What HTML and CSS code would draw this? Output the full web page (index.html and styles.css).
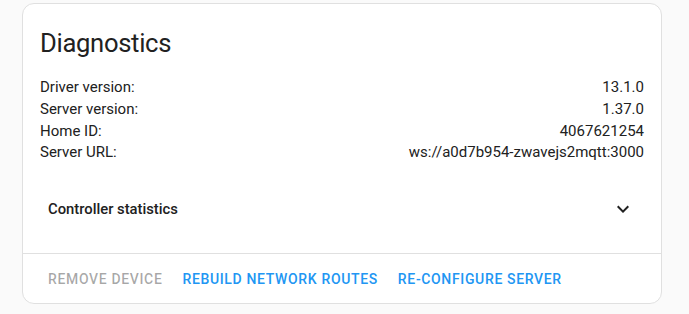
FILE: index.html
```html
<!DOCTYPE html>
<html>
<head>
<meta charset="utf-8">
<link rel="stylesheet" href="styles.css">
</head>
<body>
<div class="page">
  <div class="card">
    <h1 class="card-header">Diagnostics</h1>
    <div class="card-content">
      <div class="row"><span>Driver version:</span><span>13.1.0</span></div>
      <div class="row"><span>Server version:</span><span>1.37.0</span></div>
      <div class="row"><span>Home ID:</span><span>4067621254</span></div>
      <div class="row"><span>Server URL:</span><span>ws://a0d7b954-zwavejs2mqtt:3000</span></div>
      <div class="expansion">
        <span class="expansion-title">Controller statistics</span>
        <svg class="chevron" viewBox="0 0 24 24" width="24" height="24"><path d="M7.41,8.58L12,13.17L16.59,8.58L18,10L12,16L6,10L7.41,8.58Z"/></svg>
      </div>
    </div>
    <div class="card-actions">
      <span class="btn disabled">Remove device</span>
      <span class="btn">Rebuild network routes</span>
      <span class="btn">Re-configure server</span>
    </div>
  </div>
</div>
</body>
</html>
```
FILE: styles.css
```css
html, body {
  margin: 0;
  padding: 0;
  background: #fafafa;
  font-family: Roboto, "Noto Sans", sans-serif;
  color: #212121;
}
.page {
  padding: 3px 27px 0 22px;
}
.card {
  box-sizing: border-box;
  width: 640px;
  background: #fff;
  border: 1px solid #e0e0e0;
  border-radius: 12px;
}
.card-header {
  margin: 0;
  padding: 23px 17px 0;
  font-size: 25.6px;
  line-height: 32px;
  font-weight: 400;
  letter-spacing: -0.012em;
}
.card-content {
  padding: 18.4px 17px 19.4px;
}
.row {
  display: flex;
  justify-content: space-between;
  font-size: 15px;
  line-height: 21.67px;
}
.expansion {
  margin-top: 21.4px;
  height: 48px;
  display: flex;
  align-items: center;
  justify-content: space-between;
  padding: 0 9px 0 8px;
}
.expansion-title {
  font-size: 14.8px;
  font-weight: 500;
  line-height: 48px;
}
.chevron {
  fill: #212121;
  display: block;
}
.card-actions {
  border-top: 1px solid #e0e0e0;
  padding: 7px 8px 6px 17px;
  display: flex;
  gap: 4px;
}
.btn {
  padding: 0 8px;
  height: 36px;
  line-height: 36px;
  font-size: 14px;
  font-weight: 500;
  letter-spacing: 0.65px;
  text-transform: uppercase;
  color: #2196f3;
}
.btn.disabled {
  color: rgba(0, 0, 0, 0.35);
}
```
